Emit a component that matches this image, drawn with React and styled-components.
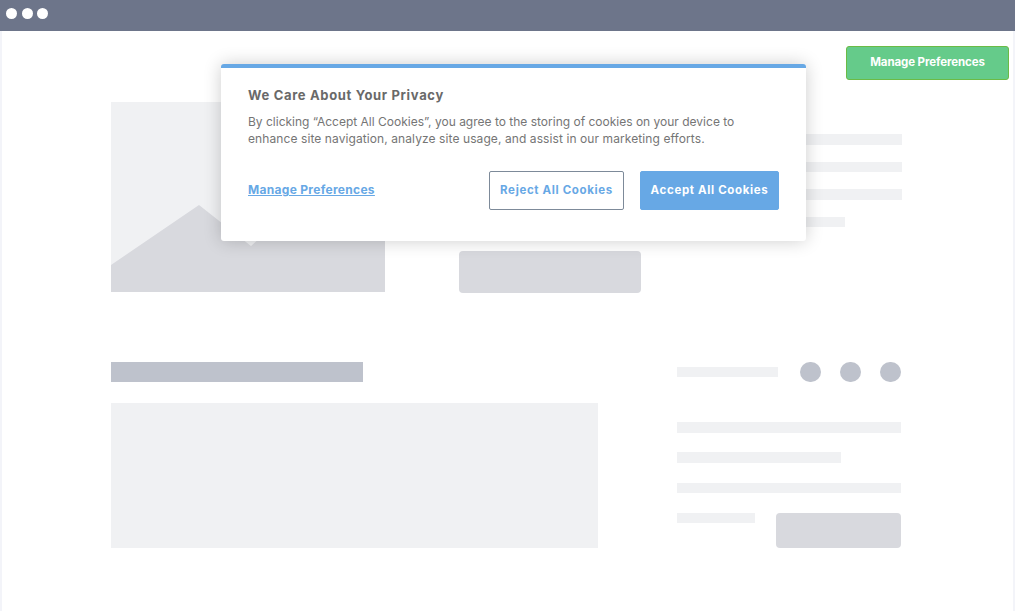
import styled, { createGlobalStyle } from 'styled-components';

const GlobalStyle = createGlobalStyle`
    * { box-sizing: border-box; }
    html, body { margin: 0; padding: 0; background: #fff; }
    body { font-family: Inter, "Open Sans", "Liberation Sans", sans-serif; }
`;

const Page = styled.div`
    position: relative;
    width: 100%;
    height: 100vh;
    overflow: hidden;
    display: flex;
    flex-direction: column;
`;

const WindowBar = styled.div`
    height: 31px;
    flex-shrink: 0;
    background-color: #6d758a;
    display: flex;
    align-items: center;
    gap: 4.5px;
    padding: 0 0 4.5px 6px;
`;

const WindowDot = styled.span`
    width: 11px;
    height: 11px;
    border-radius: 50%;
    background-color: #fff;
`;

const Frame = styled.div`
    flex: 1;
    border-left: 2px solid #f3f4f9;
    border-right: 2px solid #f3f4f9;
    padding: 71px 0 0 109px;
`;

const Row = styled.div`
    display: flex;
    align-items: flex-start;
`;

const Picture = styled.svg`
    display: block;
    width: 274px;
    height: 190px;
    flex-shrink: 0;
`;

const MiddleColumn = styled.div`
    width: 182px;
    height: 191px;
    margin: 0 36px 0 74px;
    display: flex;
    align-items: flex-end;
`;

const Block = styled.div`
    width: ${props => props.$width}px;
    height: ${props => props.$height}px;
    background-color: #d8d9de;
    border-radius: 4px;
`;

const LineStack = styled.div`
    display: flex;
    flex-direction: column;
    gap: ${props => props.$gap}px;
    padding-top: ${props => props.$top || 0}px;
`;

const Line = styled.div`
    width: ${props => props.$width}px;
    height: 10.5px;
    background-color: #f0f1f3;
`;

const BottomRow = styled(Row)`
    margin-top: 69px;
`;

const LeftColumn = styled.div`
    width: 487px;
    margin-right: 79px;
`;

const Heading = styled.div`
    width: 252px;
    height: 20px;
    background-color: #bec2cc;
    margin-bottom: 21px;
`;

const Panel = styled.div`
    width: 487px;
    height: 144.5px;
    background-color: #f0f1f3;
`;

const RightColumn = styled.div`
    width: 224px;
`;

const SocialRow = styled.div`
    display: flex;
    align-items: center;
    height: 20px;
    margin-bottom: 40px;
`;

const SocialLine = styled(Line)`
    margin-right: 22px;
`;

const Circle = styled.span`
    width: 20.5px;
    height: 20.5px;
    border-radius: 50%;
    background-color: #bec2cc;
    margin-right: 19.5px;

    &:last-child {
        margin-right: 0;
    }
`;

const LastRow = styled.div`
    display: flex;
    justify-content: space-between;
    align-items: flex-start;
`;

const FloatingButton = styled.button`
    position: absolute;
    top: 46px;
    left: 846px;
    width: 163px;
    height: 34px;
    padding: 0 0 2px;
    background-color: #65cb8a;
    border: 1px solid #6bbb45;
    border-radius: 3px;
    color: #fff;
    font-family: inherit;
    font-size: 11.5px;
    font-weight: 700;
    letter-spacing: -0.1px;
`;

const Modal = styled.div`
    position: absolute;
    top: 64px;
    left: 221px;
    width: 585px;
    height: 177px;
    padding: 19px 27px 0;
    background-color: #fff;
    border-top: 4px solid #67a8e5;
    border-radius: 3px;
    box-shadow: 0 0 18px rgba(0, 0, 0, 0.2);
`;

const Title = styled.h3`
    margin: 0 0 10px;
    font-size: 13px;
    line-height: 16px;
    font-weight: 700;
    letter-spacing: 0.66px;
    color: #696969;
`;

const Message = styled.p`
    margin: 0;
    font-size: 12px;
    line-height: 17px;
    color: #757575;
`;

const MessageLine = styled.span`
    display: block;
    letter-spacing: ${props => props.$spacing || 0}px;
`;

const Actions = styled.div`
    margin-top: 24px;
    display: flex;
    align-items: center;
`;

const SettingsLink = styled.a`
    margin: 0 auto 2px 0;
    font-size: 12px;
    font-weight: 700;
    letter-spacing: 0.3px;
    color: #67a8e5;
    text-decoration: underline;
`;

const CookieButton = styled.button`
    width: ${props => props.$width}px;
    height: 39px;
    margin-left: ${props => props.$gap || 0}px;
    padding: 0 0 1px;
    border: 1px solid ${props => (props.$primary ? '#67a8e5' : '#7d8a99')};
    border-radius: 2px;
    background-color: ${props => (props.$primary ? '#67a8e5' : '#fff')};
    color: ${props => (props.$primary ? '#fff' : '#67a8e5')};
    font-family: inherit;
    font-size: 11.5px;
    font-weight: 700;
    letter-spacing: 0.65px;
`;

const App = () => {
    return (
        <Page>
            <GlobalStyle />
            <WindowBar>
                <WindowDot />
                <WindowDot />
                <WindowDot />
            </WindowBar>
            <Frame>
                <Row>
                    <Picture viewBox="0 0 274 190">
                        <rect width="274" height="190" fill="#f0f1f3" />
                        <path d="M0 163 L88 103 L140 144 L190 100 L274 100 L274 190 L0 190 Z" fill="#d8d9de" />
                    </Picture>
                    <MiddleColumn>
                        <Block $width={182} $height={42} />
                    </MiddleColumn>
                    <LineStack $top={32} $gap={17}>
                        <Line $width={225} />
                        <Line $width={225} />
                        <Line $width={225} />
                        <Line $width={168} />
                    </LineStack>
                </Row>
                <BottomRow>
                    <LeftColumn>
                        <Heading />
                        <Panel />
                    </LeftColumn>
                    <RightColumn>
                        <SocialRow>
                            <SocialLine $width={101} />
                            <Circle />
                            <Circle />
                            <Circle />
                        </SocialRow>
                        <LineStack $gap={19.8}>
                            <Line $width={224} />
                            <Line $width={164} />
                            <Line $width={224} />
                            <LastRow>
                                <Line $width={78} />
                                <Block $width={125} $height={35} />
                            </LastRow>
                        </LineStack>
                    </RightColumn>
                </BottomRow>
            </Frame>
            <FloatingButton>Manage Preferences</FloatingButton>
            <Modal>
                <Title>We Care About Your Privacy</Title>
                <Message>
                    <MessageLine>By clicking “Accept All Cookies”, you agree to the storing of cookies on your device to</MessageLine>
                    <MessageLine $spacing={0.09}>enhance site navigation, analyze site usage, and assist in our marketing efforts.</MessageLine>
                </Message>
                <Actions>
                    <SettingsLink href="#">Manage Preferences</SettingsLink>
                    <CookieButton $width={135}>Reject All Cookies</CookieButton>
                    <CookieButton $primary $width={139} $gap={16}>Accept All Cookies</CookieButton>
                </Actions>
            </Modal>
        </Page>
    );
};

export default App;
